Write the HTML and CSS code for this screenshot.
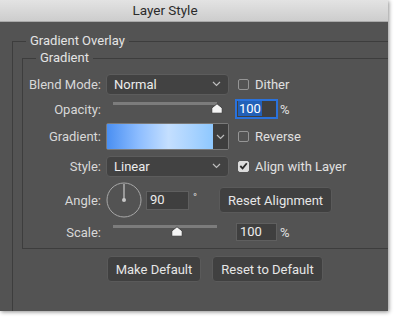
FILE: index.html
```html
<!DOCTYPE html>
<html lang="en">
<head>
  <meta charset="UTF-8">
  <meta name="viewport" content="width=device-width, initial-scale=1.0">
  <title>Layer Style</title>
  <link rel="stylesheet" href="styles.css">
</head>
<body>

  <div class="window">
    <!-- Title bar -->
    <div class="titlebar">Layer Style</div>

    <div class="panel">
      <fieldset class="group outer">
        <legend>Gradient Overlay</legend>

        <fieldset class="group inner">
          <legend>Gradient</legend>

          <div class="form">
            <!-- Blend mode -->
            <span class="lbl">Blend Mode:</span>
            <div class="select">
              <span>Normal</span>
              <svg class="chev" width="9" height="6" viewBox="0 0 9 6"><path d="M1 1 L4.5 4.5 L8 1" /></svg>
            </div>
            <label class="check"><span class="box"></span>Dither</label>

            <!-- Opacity -->
            <span class="lbl">Opacity:</span>
            <div class="slider">
              <div class="track"></div>
              <svg class="thumb" style="left: 100%;" width="12" height="11" viewBox="0 0 12 11"><path d="M6 0.8 L11.2 5 V10.2 H0.8 V5 Z" /></svg>
            </div>
            <div class="num">
              <span class="field focused"><span class="sel">100</span></span>
              <span class="unit">%</span>
            </div>

            <!-- Gradient -->
            <span class="lbl">Gradient:</span>
            <div class="grad-picker">
              <div class="swatch"></div>
              <div class="grad-arrow">
                <svg class="chev" width="9" height="6" viewBox="0 0 9 6"><path d="M1 1 L4.5 4.5 L8 1" /></svg>
              </div>
            </div>
            <label class="check"><span class="box"></span>Reverse</label>

            <!-- Style -->
            <span class="lbl">Style:</span>
            <div class="select">
              <span>Linear</span>
              <svg class="chev" width="9" height="6" viewBox="0 0 9 6"><path d="M1 1 L4.5 4.5 L8 1" /></svg>
            </div>
            <label class="check"><span class="box checked">
              <svg width="9" height="8" viewBox="0 0 9 8"><path d="M1.3 4 L3.6 6.3 L7.8 1.2" /></svg>
            </span>Align with Layer</label>

            <!-- Angle -->
            <span class="lbl">Angle:</span>
            <div class="angle-row">
              <svg class="dial" width="36" height="36" viewBox="0 0 36 36">
                <circle cx="18" cy="18" r="17" />
                <line x1="18" y1="2" x2="18" y2="18" />
                <circle class="dot" cx="18" cy="18" r="2" />
              </svg>
              <span class="field angle">90</span>
              <span class="deg">°</span>
              <button class="btn reset-align">Reset Alignment</button>
            </div>

            <!-- Scale -->
            <span class="lbl">Scale:</span>
            <div class="slider">
              <div class="track"></div>
              <svg class="thumb" style="left: 62%;" width="12" height="11" viewBox="0 0 12 11"><path d="M6 0.8 L11.2 5 V10.2 H0.8 V5 Z" /></svg>
            </div>
            <div class="num">
              <span class="field">100</span>
              <span class="unit">%</span>
            </div>
          </div>
        </fieldset>

        <div class="actions">
          <button class="btn">Make Default</button>
          <button class="btn">Reset to Default</button>
        </div>
      </fieldset>
    </div>
  </div>

</body>
</html>
```

FILE: styles.css
```css
/* General Reset */
* {
  margin: 0;
  padding: 0;
  box-sizing: border-box;
}

body {
  font-family: 'Roboto', 'Inter', sans-serif;
  font-size: 13px;
  background: #fff;
  color: #d8d8d8;
  width: 396px;
  height: 321px;
  overflow: hidden;
}

/* Window */
.window {
  width: 388px;
  height: 311px;
  display: flex;
  flex-direction: column;
  box-shadow: 1px 1px 4px rgba(0, 0, 0, 0.45);
}

.titlebar {
  height: 22px;
  line-height: 21px;
  background: linear-gradient(to bottom, #e3e3e3, #cdcdcd);
  border-bottom: 1px solid #a9a9a9;
  color: #2b2b2b;
  font-size: 13.5px;
  text-align: center;
  padding-right: 58px;
}

.panel {
  flex: 1;
  background-color: #535353;
  padding: 11px 0 0 12px;
  display: flex;
  flex-direction: column;
}

/* Group boxes */
.group {
  border: 1px solid #3d3d3d;
  border-right: none;
  min-width: 0;
}

.group legend {
  line-height: 16px;
  padding: 0 4px;
  color: #e4e4e4;
}

.outer {
  flex: 1;
  border-bottom: none;
  padding: 1px 0 0 9px;
}

.outer > legend {
  margin-left: 4px;
}

.inner {
  padding: 7px 0 7px 0;
}

.inner > legend {
  margin-left: 13px;
}

/* Form grid */
.form {
  display: grid;
  grid-template-columns: 83px 130px 1fr;
  grid-template-rows: 22px 18px 27px 22px 36px 18px;
  row-gap: 5px;
  align-items: center;
}

.lbl {
  text-align: right;
  padding-right: 5px;
  white-space: nowrap;
}

.select {
  width: 123px;
  height: 21px;
  background-color: #424242;
  border: 1px solid #5c5c5c;
  border-radius: 4px;
  display: flex;
  align-items: center;
  justify-content: space-between;
  padding: 0 7px 0 7px;
  color: #ececec;
}

.chev path {
  fill: none;
  stroke: #bdbdbd;
  stroke-width: 1.2;
}

.check {
  display: flex;
  align-items: center;
  gap: 6px;
  margin-left: 2px;
  white-space: nowrap;
  color: #e0e0e0;
}

.box {
  width: 11px;
  height: 11px;
  border: 1px solid #959595;
  border-radius: 2px;
  display: flex;
  align-items: center;
  justify-content: center;
}

.box.checked {
  background-color: #dcdcdc;
  border-color: #dcdcdc;
}

.box.checked path {
  fill: none;
  stroke: #2a2a2a;
  stroke-width: 1.8;
}

/* Sliders */
.slider {
  position: relative;
  align-self: stretch;
  margin-left: 7px;
  width: 104px;
}

.slider .track {
  margin-top: 2px;
  height: 3px;
  background-color: #7c7c7c;
}

.slider .thumb {
  position: absolute;
  top: 3px;
  margin-left: -6px;
}

.thumb path {
  fill: #f4f4f4;
  stroke: #2e2e2e;
  stroke-width: 0.8;
  stroke-linejoin: round;
}

/* Number fields */
.num {
  display: flex;
  align-items: center;
  gap: 3px;
}

.field {
  height: 18px;
  width: 41px;
  background-color: #3f3f3f;
  border: 1px solid #5f5f5f;
  padding-left: 3px;
  line-height: 16px;
  color: #ececec;
  display: block;
}

.field.focused {
  border: 1px solid #2a72dc;
  box-shadow: 0 0 0 1px #2a72dc;
  padding-left: 1px;
}

.sel {
  display: inline-block;
  background-color: #2260b8;
  color: #fff;
  line-height: 15px;
  padding: 0 1px;
}

.unit {
  color: #e0e0e0;
}

/* Gradient picker */
.grad-picker {
  width: 123px;
  height: 27px;
  display: flex;
  border: 1px solid #7a7a7a;
  border-radius: 2px;
}

.swatch {
  flex: 1;
  background: linear-gradient(to right, #4a8ff2 0%, #8dbdff 30%, #c4dfff 58%, #a9d3ff 80%, #8ec8ff 100%);
}

.grad-arrow {
  width: 15px;
  background-color: #3e3e3e;
  display: flex;
  align-items: center;
  justify-content: center;
}

/* Angle */
.angle-row {
  grid-column: 2 / 4;
  display: flex;
  align-items: center;
}

.dial circle {
  fill: none;
  stroke: #a8a8a8;
  stroke-width: 1;
}

.dial line {
  stroke: #c8c8c8;
  stroke-width: 1.2;
}

.dial .dot {
  fill: #c8c8c8;
  stroke: none;
}

.field.angle {
  margin-left: 4px;
  width: 43px;
  height: 19px;
  padding-left: 3px;
}

.deg {
  align-self: flex-start;
  margin: 10px 0 0 4px;
  font-size: 11px;
  line-height: 11px;
}

/* Buttons */
.btn {
  font-family: inherit;
  font-size: 13px;
  color: #e6e6e6;
  background-color: #404040;
  border: 1px solid #5a5a5a;
  border-radius: 4px;
  height: 26px;
  padding: 0;
  white-space: nowrap;
}

.reset-align {
  margin-left: 22px;
  width: 113px;
}

.actions {
  display: flex;
  gap: 11px;
  padding-left: 85px;
  margin-top: 7px;
}

.actions .btn:first-child {
  width: 94px;
}

.actions .btn:last-child {
  width: 111px;
}
```
